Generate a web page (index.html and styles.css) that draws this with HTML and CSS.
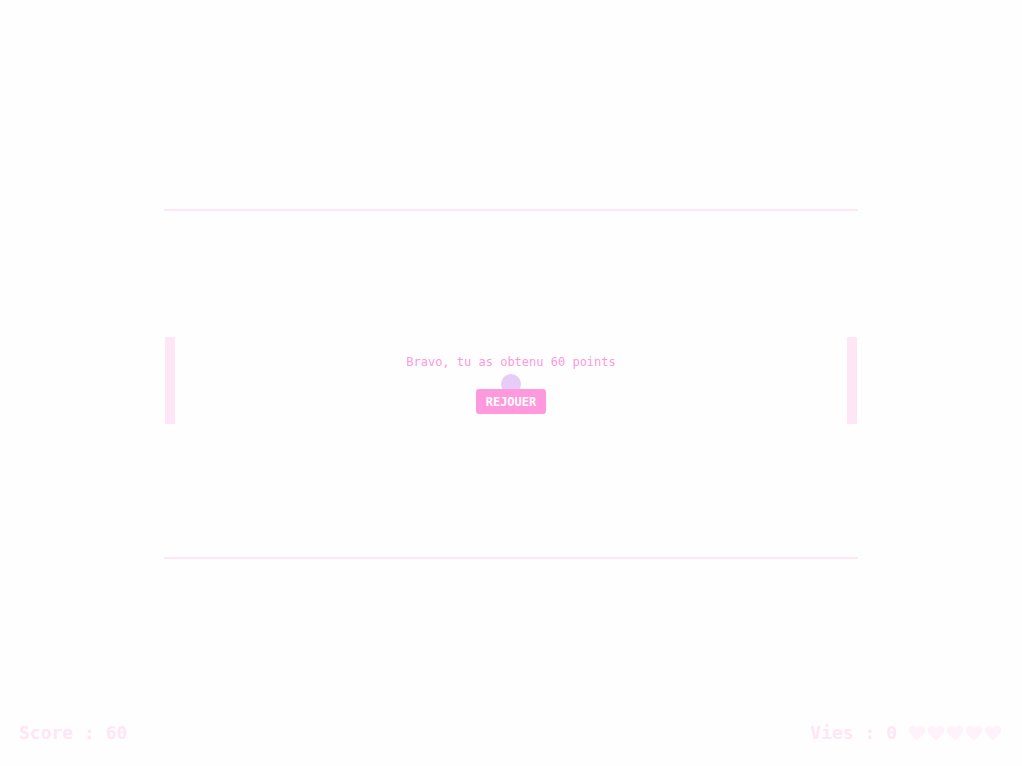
FILE: index.html
```html
<!DOCTYPE html>
<html lang="fr">
<head>
<meta charset="utf-8">
<title>Pong</title>
<link rel="stylesheet" href="styles.css">
</head>
<body>
<main class="stage">
  <section class="board">
    <div class="paddle paddle-left"></div>
    <div class="paddle paddle-right"></div>
    <div class="ball"></div>
    <div class="message">
      <p class="message-text">Bravo, tu as obtenu 60 points</p>
      <button class="replay">REJOUER</button>
    </div>
  </section>
</main>
<footer class="hud">
  <div class="score">Score : 60</div>
  <div class="lives">
    <span>Vies : 0</span>
    <span class="hearts">
      <svg class="heart" viewBox="0 0 20 18"><path d="M10 17.5 L2.2 9.6 C-0.3 7.1 0.4 2.5 3.6 1.2 C6 0.2 8.5 1.2 10 3.4 C11.5 1.2 14 0.2 16.4 1.2 C19.6 2.5 20.3 7.1 17.8 9.6 Z"/></svg>
      <svg class="heart" viewBox="0 0 20 18"><path d="M10 17.5 L2.2 9.6 C-0.3 7.1 0.4 2.5 3.6 1.2 C6 0.2 8.5 1.2 10 3.4 C11.5 1.2 14 0.2 16.4 1.2 C19.6 2.5 20.3 7.1 17.8 9.6 Z"/></svg>
      <svg class="heart" viewBox="0 0 20 18"><path d="M10 17.5 L2.2 9.6 C-0.3 7.1 0.4 2.5 3.6 1.2 C6 0.2 8.5 1.2 10 3.4 C11.5 1.2 14 0.2 16.4 1.2 C19.6 2.5 20.3 7.1 17.8 9.6 Z"/></svg>
      <svg class="heart" viewBox="0 0 20 18"><path d="M10 17.5 L2.2 9.6 C-0.3 7.1 0.4 2.5 3.6 1.2 C6 0.2 8.5 1.2 10 3.4 C11.5 1.2 14 0.2 16.4 1.2 C19.6 2.5 20.3 7.1 17.8 9.6 Z"/></svg>
      <svg class="heart" viewBox="0 0 20 18"><path d="M10 17.5 L2.2 9.6 C-0.3 7.1 0.4 2.5 3.6 1.2 C6 0.2 8.5 1.2 10 3.4 C11.5 1.2 14 0.2 16.4 1.2 C19.6 2.5 20.3 7.1 17.8 9.6 Z"/></svg>
    </span>
  </div>
</footer>
</body>
</html>
```

FILE: styles.css
```css
html, body {
  margin: 0;
  padding: 0;
  height: 100%;
}
body {
  background: #fefefe;
  font-family: "DejaVu Sans Mono", "Liberation Mono", monospace;
  overflow: hidden;
}
.stage {
  height: 766px;
  box-sizing: border-box;
  padding-top: 2px;
  display: flex;
  align-items: center;
  justify-content: center;
}
.board {
  position: relative;
  width: 694px;
  height: 346px;
  border-top: 2px solid #ffe8f6;
  border-bottom: 2px solid #ffe8f6;
  display: flex;
  align-items: center;
  justify-content: center;
}
.paddle {
  position: absolute;
  top: 126px;
  width: 10px;
  height: 87px;
  background: #ffe6f6;
}
.paddle-left { left: 1px; }
.paddle-right { right: 1px; }
.ball {
  position: absolute;
  left: 337px;
  top: 163px;
  width: 20px;
  height: 20px;
  border-radius: 50%;
  background: #e6ccf6;
}
.message {
  position: relative;
  display: flex;
  flex-direction: column;
  align-items: center;
  margin-top: 1px;
}
.message-text {
  margin: 0 0 20px;
  font-size: 12px;
  line-height: 14px;
  color: #ff99dd;
}
.replay {
  border: none;
  border-radius: 3px;
  background: #ff99dd;
  color: #ffffff;
  font-family: "DejaVu Sans Mono", "Liberation Mono", monospace;
  font-weight: bold;
  font-size: 12px;
  width: 70px;
  height: 25px;
  padding: 0;
  margin: 0;
}
.hud {
  position: absolute;
  left: 0;
  right: 0;
  bottom: 22px;
  padding: 0 20px 0 19px;
  display: flex;
  justify-content: space-between;
  align-items: center;
  font-weight: bold;
  font-size: 18px;
  line-height: 22px;
  color: #ffe6f5;
}
.lives {
  display: flex;
  align-items: center;
  gap: 11px;
}
.hearts {
  display: flex;
  gap: 1px;
}
.heart {
  width: 18px;
  height: 16px;
  fill: #fff2fa;
}
```
